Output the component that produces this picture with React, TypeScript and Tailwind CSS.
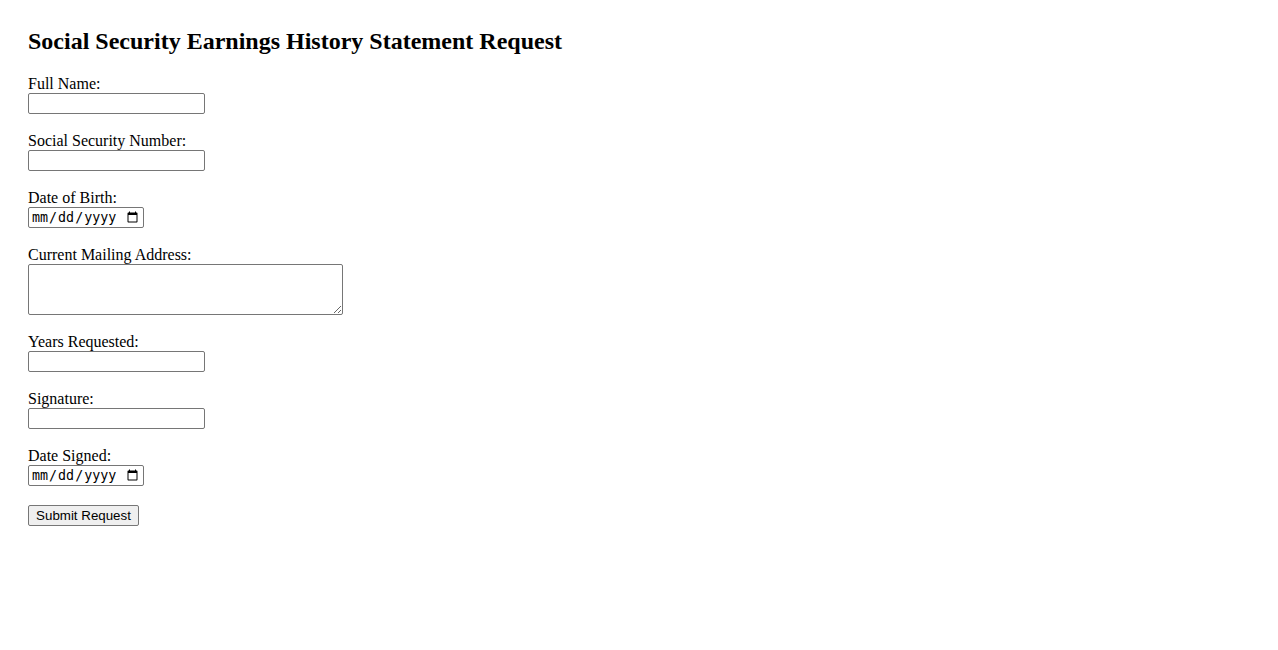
import React from "react";

const textInput =
  "block w-[177px] h-[21px] border border-[#767676] rounded-[2px] bg-white px-[2px] py-[1px] text-[13.33px] font-['Liberation_Sans',Arial,sans-serif] text-black";
const dateInput =
  "block w-[116px] h-[21px] border border-[#767676] rounded-[2px] bg-white px-[2px] py-0 text-[13.33px] leading-[17px] font-['DejaVu_Sans_Mono','Liberation_Mono',monospace] text-black";
const labelCls = "block h-[18px] leading-[18px] text-[16px]";

function Field({ label, children, gap = "mb-[18px]" }: { label: string; children: React.ReactNode; gap?: string }) {
  return (
    <div className={gap}>
      <label className={labelCls}>{label}</label>
      {children}
    </div>
  );
}

export default function App() {
  return (
    <div className="min-h-screen bg-white px-[28px] pt-[27px] font-['Liberation_Serif','Times_New_Roman',serif] text-black">
      <h2 className="text-[24px] font-bold leading-[28px] mb-[20px]">
        Social Security Earnings History Statement Request
      </h2>
      <form onSubmit={e => e.preventDefault()}>
        <Field label="Full Name:">
          <input type="text" className={textInput} />
        </Field>
        <Field label="Social Security Number:">
          <input type="text" className={textInput} />
        </Field>
        <Field label="Date of Birth:">
          <input type="date" className={dateInput} />
        </Field>
        <div className="mb-[18px]">
          <label className={labelCls}>Current Mailing Address:</label>
          <textarea className="block w-[315px] h-[51px] border border-[#767676] rounded-[2px] bg-white p-[2px] text-[13.33px] font-['Liberation_Mono',monospace]" />
        </div>
        <Field label="Years Requested:">
          <input type="text" className={textInput} />
        </Field>
        <Field label="Signature:">
          <input type="text" className={textInput} />
        </Field>
        <Field label="Date Signed:" gap="mb-[19px]">
          <input type="date" className={dateInput} />
        </Field>
        <button
          type="submit"
          className="block w-[111px] h-[21px] border border-[#767676] rounded-[2px] bg-[#efefef] px-[6px] text-[13.33px] leading-[17px] font-['Liberation_Sans',Arial,sans-serif] text-black"
        >
          Submit Request
        </button>
      </form>
    </div>
  );
}
